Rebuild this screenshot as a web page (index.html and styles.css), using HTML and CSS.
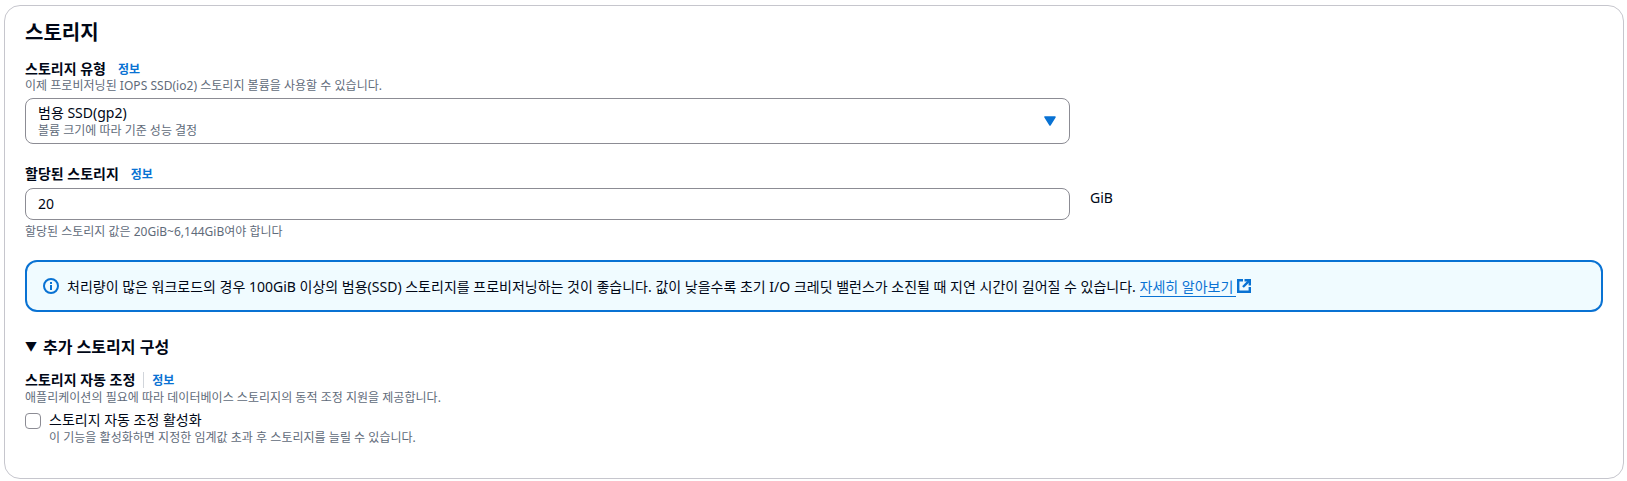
FILE: index.html
```html
<!DOCTYPE html>
<html lang="ko">
<head>
  <meta charset="UTF-8" />
  <title>스토리지</title>
  <link rel="stylesheet" href="styles.css">
</head>
<body>
  <section class="card">
    <h2>스토리지</h2>

    <div class="field type-field">
      <div class="label-row"><span class="label">스토리지 유형</span><a class="info">정보</a></div>
      <div class="desc">이제 프로비저닝된 IOPS SSD(io2) 스토리지 볼륨을 사용할 수 있습니다.</div>
      <div class="select box">
        <div>
          <div class="select-value">범용 SSD(gp2)</div>
          <div class="select-sub">볼륨 크기에 따라 기준 성능 결정</div>
        </div>
        <svg class="caret" viewBox="0 0 12 10" width="12" height="10">
          <path d="M1 1h10L6 9z" fill="#0972d3" stroke="#0972d3" stroke-width="1.5" stroke-linejoin="round"/>
        </svg>
      </div>
    </div>

    <div class="field size-field">
      <div class="label-row"><span class="label">할당된 스토리지</span><a class="info">정보</a></div>
      <div class="input-row">
        <div class="input box">20</div>
        <span class="unit">GiB</span>
      </div>
      <div class="hint">할당된 스토리지 값은 20GiB~6,144GiB여야 합니다</div>
    </div>

    <div class="alert">
      <svg class="alert-icon" viewBox="0 0 16 16" width="16" height="16">
        <circle cx="8" cy="8" r="7" fill="none" stroke="#0972d3" stroke-width="2"/>
        <rect x="7" y="7" width="2" height="5" fill="#0972d3"/>
        <rect x="7" y="4" width="2" height="2" fill="#0972d3"/>
      </svg>
      <span>처리량이 많은 워크로드의 경우 100GiB 이상의 범용(SSD) 스토리지를 프로비저닝하는 것이 좋습니다. 값이 낮을수록 초기 I/O 크레딧 밸런스가 소진될 때 지연 시간이 길어질 수 있습니다. <a class="learn">자세히 알아보기</a></span>
      <svg class="ext-icon" viewBox="0 0 14 14" width="14" height="14" fill="none" stroke="#0972d3" stroke-width="2.4">
        <path d="M6 1.2H1.2v11.6h11.6V8"/>
        <path d="M7.5 1.2h5.3v5.3"/>
        <path d="M12.8 1.2 6 8"/>
      </svg>
    </div>

    <div class="expander"><span class="tri">▼</span>추가 스토리지 구성</div>

    <div class="label-row auto-row"><span class="label">스토리지 자동 조정</span><span class="sep"></span><a class="info">정보</a></div>
    <div class="desc">애플리케이션의 필요에 따라 데이터베이스 스토리지의 동적 조정 지원을 제공합니다.</div>
    <div class="check-row">
      <span class="check"></span>
      <div>
        <div class="check-label">스토리지 자동 조정 활성화</div>
        <div class="desc">이 기능을 활성화하면 지정한 임계값 초과 후 스토리지를 늘릴 수 있습니다.</div>
      </div>
    </div>
  </section>
</body>
</html>
```

FILE: styles.css
```css
html,body{margin:0;background:#fff}
body{font-family:"Noto Sans","Noto Sans CJK KR",sans-serif;color:#000716;font-size:14px;padding:5px 0 0 4px;height:481px;box-sizing:border-box;overflow:hidden}
.card{border:1px solid #c6c6cd;border-radius:16px;height:474px;width:1620px;box-sizing:border-box;padding:13px 20px 0}
h2{margin:0;font-size:20px;line-height:28px;font-weight:700}
.field{width:1045px}
.type-field{margin-top:12px}
.type-field .label-row{height:19px}
.size-field{margin-top:20px}
.label-row{display:flex;align-items:center;height:20px}
.label{font-size:14px;font-weight:700;line-height:20px}
.info{font-size:12px;font-weight:700;color:#0972d3;margin-left:12px}
.desc,.hint,.select-sub{font-size:12px;line-height:16px;color:#5f6b7a}
.desc{letter-spacing:.03px}
.box{border:1px solid #8c8c94;border-radius:8px;box-sizing:border-box;background:#fff}
.select{height:46px;margin-top:4px;padding:4px 12px;display:flex;justify-content:space-between;align-items:center;width:1045px}
.select-value{font-size:14px;line-height:20px}
.caret{margin-right:1px;flex:none}
.input-row{display:flex;margin-top:4px}
.input{width:1045px;height:32px;padding:0 12px;line-height:30px;flex:none}
.unit{margin-left:20px;line-height:20px}
.hint{margin-top:4px}
.alert{display:flex;align-items:center;height:52px;width:1578px;box-sizing:border-box;margin-top:20px;border:2px solid #0972d3;border-radius:12px;background:#f0fbff;padding:0 16px}
.alert-icon{margin-right:8px;flex:none}
.learn{color:#0972d3;border-bottom:1px solid #0972d3;padding-right:3px}
.ext-icon{margin-left:1px;flex:none}
.expander{margin-top:24px;font-size:16px;font-weight:700;line-height:22px;display:flex;align-items:center}
.tri{font-size:12px;margin-right:6px}
.auto-row{margin-top:12px}
.sep{width:1px;height:16px;background:#d1d5db;margin-left:8px}
.auto-row .info{margin-left:8px}
.check-row{display:flex;margin-top:4px}
.check{width:14px;height:14px;border:1px solid #8c8c94;border-radius:4px;margin:3px 8px 0 0;flex:none}
.check-label{line-height:20px}
```
